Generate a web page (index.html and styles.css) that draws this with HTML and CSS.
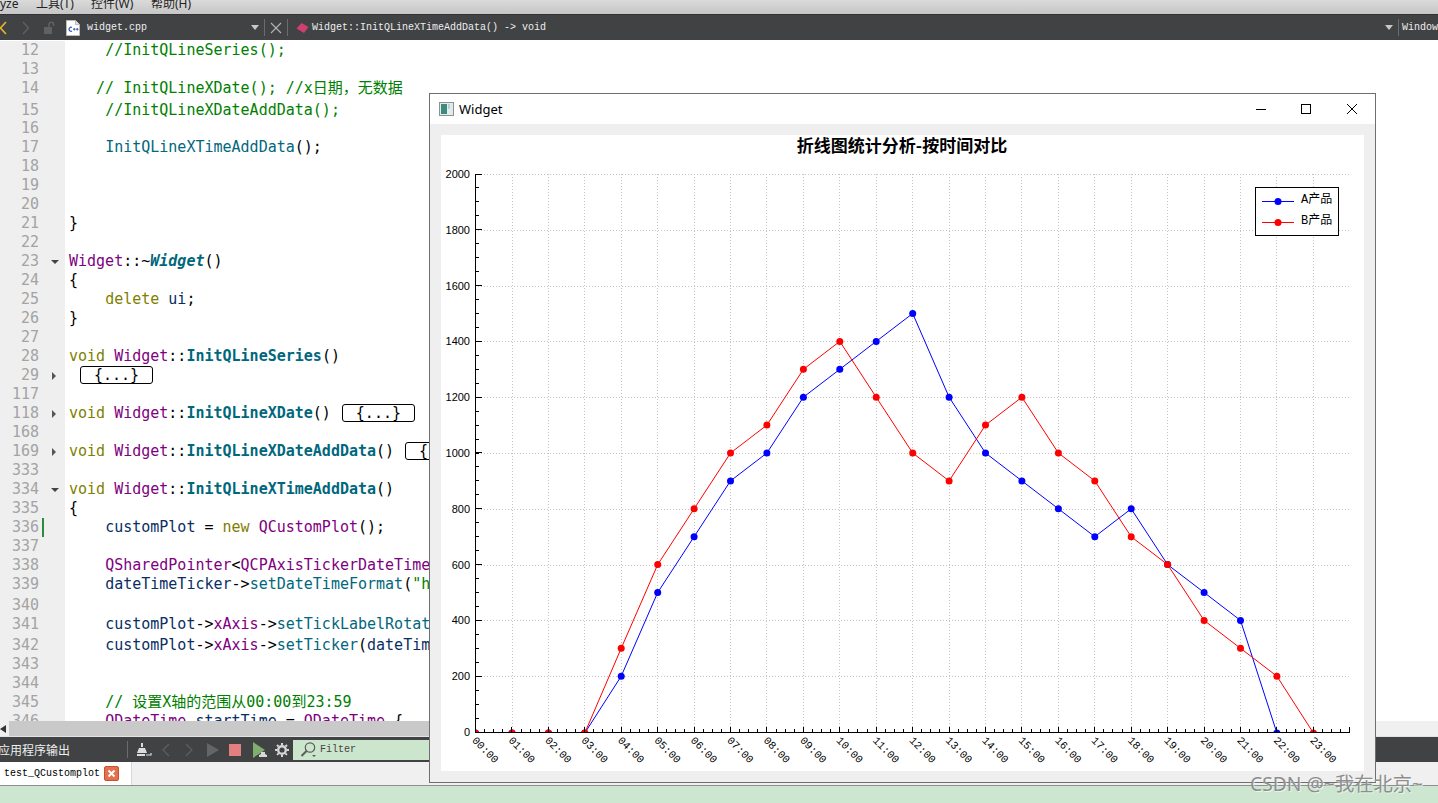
FILE: index.html
```html
<!DOCTYPE html>
<html lang="zh">
<head>
<meta charset="utf-8">
<title>Widget</title>
<link rel="stylesheet" href="styles.css">
</head>
<body>
<div class="ide">
  <div class="menubar"><span class="m-yze">yze</span><span class="m-tools">工具(T)</span><span class="m-ctl">控件(W)</span><span class="m-help">帮助(H)</span></div>

  <div class="toolbar">
    <svg class="ic ic-back" width="10" height="16" viewBox="0 0 10 16"><path d="M7 2 1.500 8 7 14" fill="none" stroke="#e5b52a" stroke-width="1.600"/></svg>
    <svg class="ic ic-fwd" width="10" height="16" viewBox="0 0 10 16"><path d="M2 2l5.500 6L2 14" fill="none" stroke="#5c5e60" stroke-width="1.600"/></svg>
    <svg class="ic ic-lock" width="14" height="14" viewBox="0 0 14 14"><rect x="1" y="6" width="8" height="7" fill="#5f6163"/><path d="M6 6V3.500a2.300 2.300 0 0 1 4.600 0V5" fill="none" stroke="#5f6163" stroke-width="1.500"/></svg>
    <svg class="ic ic-file" width="14" height="16" viewBox="0 0 14 16"><path d="M.5.500h9l4 4v11H.500z" fill="#fff" stroke="#bbb"/><path d="M9.500.500v4h4" fill="#ddd" stroke="#bbb"/><path d="M6 7.500a2 2 0 1 0 0 3.500" fill="none" stroke="#2a52c0" stroke-width="1.200"/><path d="M7 9.200h2.600M8.300 8v2.500M10 9.200h2.600M11.300 8v2.500" stroke="#2a52c0" stroke-width=".9"/></svg>
    <span class="tb-text tb-file">widget.cpp</span>
    <svg class="ic ic-drop" width="8" height="5" viewBox="0 0 8 5"><path d="M0 0h8L4 5z" fill="#c8c8c8"/></svg>
    <span class="tb-sep sep-a"></span>
    <svg class="ic ic-x" width="12" height="12" viewBox="0 0 12 12"><path d="M1 1l10 10M11 1 1 11" stroke="#b5b5b5" stroke-width="1.100"/></svg>
    <span class="tb-sep sep-b"></span>
    <svg class="ic ic-diamond" width="13" height="12" viewBox="0 0 13 12"><path d="M.5 6.500 5.500 1l7 4L8 11z" fill="#d0406e"/></svg>
    <span class="tb-text tb-func">Widget::InitQLineXTimeAddData() -&gt; void</span>
    <svg class="ic ic-drop2" width="8" height="5" viewBox="0 0 8 5"><path d="M0 0h8L4 5z" fill="#c8c8c8"/></svg>
    <span class="tb-sep sep-c"></span>
    <span class="tb-text tb-win">Window</span>
  </div>

  <div class="editor">
    <div class="row"><span class="num">12</span><span class="fold"></span><span class="code">    <i class="c">//InitQLineSeries();</i></span></div>
    <div class="row"><span class="num">13</span><span class="fold"></span><span class="code"></span></div>
    <div class="row taller"><span class="num">14</span><span class="fold"></span><span class="code">   <i class="c">// InitQLineXDate(); //x日期，无数据</i></span></div>
    <div class="row short"><span class="num">15</span><span class="fold"></span><span class="code">    <i class="c">//InitQLineXDateAddData();</i></span></div>
    <div class="row"><span class="num">16</span><span class="fold"></span><span class="code"></span></div>
    <div class="row"><span class="num">17</span><span class="fold"></span><span class="code">    <i class="f">InitQLineXTimeAddData</i>();</span></div>
    <div class="row"><span class="num">18</span><span class="fold"></span><span class="code"></span></div>
    <div class="row"><span class="num">19</span><span class="fold"></span><span class="code"></span></div>
    <div class="row"><span class="num">20</span><span class="fold"></span><span class="code"></span></div>
    <div class="row"><span class="num">21</span><span class="fold"></span><span class="code">}</span></div>
    <div class="row"><span class="num">22</span><span class="fold"></span><span class="code"></span></div>
    <div class="row"><span class="num">23</span><span class="fold"><b class="arr-d"></b></span><span class="code"><i class="t">Widget</i>::~<i class="fi">Widget</i>()</span></div>
    <div class="row"><span class="num">24</span><span class="fold"></span><span class="code">{</span></div>
    <div class="row"><span class="num">25</span><span class="fold"></span><span class="code">    <i class="k">delete</i> <i class="v">ui</i>;</span></div>
    <div class="row"><span class="num">26</span><span class="fold"></span><span class="code">}</span></div>
    <div class="row"><span class="num">27</span><span class="fold"></span><span class="code"></span></div>
    <div class="row"><span class="num">28</span><span class="fold"></span><span class="code"><i class="k">void</i> <i class="t">Widget</i>::<i class="fb">InitQLineSeries</i>()</span></div>
    <div class="row"><span class="num">29</span><span class="fold"><b class="arr-r"></b></span><span class="code"><span class="coll">{...}</span></span></div>
    <div class="row"><span class="num">117</span><span class="fold"></span><span class="code"></span></div>
    <div class="row"><span class="num">118</span><span class="fold"><b class="arr-r"></b></span><span class="code"><i class="k">void</i> <i class="t">Widget</i>::<i class="fb">InitQLineXDate</i>()<span class="coll">{...}</span></span></div>
    <div class="row"><span class="num">168</span><span class="fold"></span><span class="code"></span></div>
    <div class="row"><span class="num">169</span><span class="fold"><b class="arr-r"></b></span><span class="code"><i class="k">void</i> <i class="t">Widget</i>::<i class="fb">InitQLineXDateAddData</i>()<span class="coll">{...}</span></span></div>
    <div class="row"><span class="num">333</span><span class="fold"></span><span class="code"></span></div>
    <div class="row"><span class="num">334</span><span class="fold"><b class="arr-d"></b></span><span class="code"><i class="k">void</i> <i class="t">Widget</i>::<i class="fb">InitQLineXTimeAddData</i>()</span></div>
    <div class="row"><span class="num">335</span><span class="fold"></span><span class="code">{</span></div>
    <div class="row"><span class="num">336</span><span class="fold"><b class="mod"></b></span><span class="code">    <i class="v">customPlot</i> = <i class="k">new</i> <i class="t">QCustomPlot</i>();</span></div>
    <div class="row"><span class="num">337</span><span class="fold"></span><span class="code"></span></div>
    <div class="row"><span class="num">338</span><span class="fold"></span><span class="code">    <i class="t">QSharedPointer</i>&lt;<i class="t">QCPAxisTickerDateTime</i>&gt; <i class="v">dateTimeTicker</i>(<i class="k">new</i> <i class="t">QCPAxisTickerDateTime</i>);</span></div>
    <div class="row tall"><span class="num">339</span><span class="fold"></span><span class="code">    <i class="v">dateTimeTicker</i>-&gt;<i class="f">setDateTimeFormat</i>(<i class="c">"hh:mm"</i>);</span></div>
    <div class="row"><span class="num">340</span><span class="fold"></span><span class="code"></span></div>
    <div class="row tall"><span class="num">341</span><span class="fold"></span><span class="code">    <i class="v">customPlot</i>-&gt;<i class="t">xAxis</i>-&gt;<i class="f">setTickLabelRotation</i>(45);</span></div>
    <div class="row"><span class="num">342</span><span class="fold"></span><span class="code">    <i class="v">customPlot</i>-&gt;<i class="t">xAxis</i>-&gt;<i class="f">setTicker</i>(<i class="v">dateTimeTicker</i>);</span></div>
    <div class="row"><span class="num">343</span><span class="fold"></span><span class="code"></span></div>
    <div class="row"><span class="num">344</span><span class="fold"></span><span class="code"></span></div>
    <div class="row"><span class="num">345</span><span class="fold"></span><span class="code">    <i class="c">// 设置X轴的范围从00:00到23:59</i></span></div>
    <div class="row"><span class="num">346</span><span class="fold"></span><span class="code">    <i class="t">QDateTime</i> <i class="v">startTime</i> = <i class="t">QDateTime</i> {</span></div>
  </div>

  <div class="hscroll"><span class="hs-left"><svg width="7" height="8" viewBox="0 0 7 8"><path d="M6 0v8L0 4z" fill="#333"/></svg></span><span class="hs-thumb"></span></div>

  <div class="outbar">
    <span class="out-title">应用程序输出</span>
    <span class="out-sep"></span>
    <svg class="ob ob-broom" width="16" height="16" viewBox="0 0 16 16"><path d="M5 1h2v4H5z" fill="#ddd"/><path d="M3 6h6l2 5H1z" fill="#ddd"/><path d="M10 13h5v-2" fill="none" stroke="#ddd" stroke-width="1.200"/><path d="M1 12h8v2H1z" fill="#ddd"/></svg>
    <svg class="ob ob-prev" width="10" height="14" viewBox="0 0 10 14"><path d="M8 1 2 7l6 6" fill="none" stroke="#5c5e60" stroke-width="1.300"/></svg>
    <svg class="ob ob-next" width="10" height="14" viewBox="0 0 10 14"><path d="M2 1l6 6-6 6" fill="none" stroke="#5c5e60" stroke-width="1.300"/></svg>
    <svg class="ob ob-play" width="12" height="14" viewBox="0 0 12 14"><path d="M0 0l12 7-12 7z" fill="#636567"/></svg>
    <span class="ob ob-stop"></span>
    <svg class="ob ob-run" width="14" height="16" viewBox="0 0 14 16"><path d="M0 0l12 8-12 8z" fill="#7fae6e"/><path d="M6 15h8v-2l-2-1v-2H8v2l-2 1z" fill="#d8d8d8"/></svg>
    <svg class="ob ob-gear" width="14" height="14" viewBox="0 0 14 14"><circle cx="7" cy="7" r="3.800" fill="none" stroke="#d5d5d5" stroke-width="2.400"/><path d="M7 0v14M0 7h14M2 2l10 10M12 2 2 12" stroke="#d5d5d5" stroke-width="2" stroke-dasharray="2.200 9.600 2.200"/></svg>
    <span class="filter">
      <svg width="17" height="17" viewBox="0 0 17 17"><circle cx="10" cy="6.500" r="4.700" fill="none" stroke="#5b5b5b" stroke-width="1.200"/><path d="M6.500 10 1.500 15" stroke="#5b5b5b" stroke-width="2"/><path d="M12 14h4l-2 2z" fill="#5b5b5b"/></svg>
      <span class="filter-text">Filter</span>
    </span>
  </div>

  <div class="tabs">
    <div class="tab"><span class="tab-text">test_QCustomplot</span><svg width="15" height="15" viewBox="0 0 15 15"><rect x=".5" y=".5" width="14" height="14" rx="1.500" fill="#e66f4e" stroke="#c4532f"/><path d="M4.500 4.500l6 6M10.500 4.500l-6 6" stroke="#fff" stroke-width="2"/></svg></div>
  </div>
  <div class="statusbar"></div>
</div>

<section class="window">
  <header class="win-title">
    <svg class="win-icon" width="15" height="14" viewBox="0 0 15 14"><rect x=".5" y=".5" width="14" height="13" fill="#e6ecec" stroke="#8a9292"/><rect x="2" y="2" width="6" height="10" fill="#3f8a7e"/><rect x="9" y="2" width="2" height="5" fill="#b8cfd4"/><rect x="12" y="2" width="1.500" height="10" fill="#dfe6e6"/></svg>
    <span class="win-name">Widget</span>
    <svg class="win-btn btn-min" width="10" height="10" viewBox="0 0 10 10"><path d="M0 5.500h10" stroke="#000"/></svg>
    <svg class="win-btn btn-max" width="10" height="10" viewBox="0 0 10 10"><rect x=".5" y=".5" width="9" height="9" fill="none" stroke="#000"/></svg>
    <svg class="win-btn btn-close" width="10" height="10" viewBox="0 0 10 10"><path d="M0 0l10 10M10 0 0 10" stroke="#000"/></svg>
  </header>
  <div class="win-body">
    <svg class="plot" width="923" height="636" viewBox="441 135 923 636">
      <defs>
        <clipPath id="area"><rect x="475" y="165" width="876" height="567"/></clipPath>
        <marker id="dot-b" markerUnits="userSpaceOnUse" markerWidth="8" markerHeight="8" refX="4" refY="4"><circle cx="4" cy="4" r="3.500" fill="#0000ff"/></marker>
        <marker id="dot-r" markerUnits="userSpaceOnUse" markerWidth="8" markerHeight="8" refX="4" refY="4"><circle cx="4" cy="4" r="3.500" fill="#ff0000"/></marker>
      </defs>
      <text class="title" x="902" y="151.500">折线图统计分析-按时间对比</text>

      <path class="grid" d="M475 174.500H1350M475 230.500H1350M475 286.500H1350M475 341.500H1350M475 397.500H1350M475 453.500H1350M475 509.500H1350M475 565.500H1350M475 620.500H1350M475 676.500H1350"/>
      <path class="grid" d="M512 174V732M548.500 174V732M584.500 174V732M621.500 174V732M657.500 174V732M694.500 174V732M730.500 174V732M766.500 174V732M803.500 174V732M839.500 174V732M876.500 174V732M912.500 174V732M949.500 174V732M985.500 174V732M1021.500 174V732M1058.500 174V732M1094.500 174V732M1131.500 174V732M1167.500 174V732M1204.500 174V732M1240.500 174V732M1276.500 174V732M1313.500 174V732"/>

      <g clip-path="url(#area)">
        <polyline class="ser ser-a" points="475.500,733 512,733 548.400,733 584.800,733 621.200,676.200 657.700,592.500 694.100,536.700 730.500,480.900 766.900,453 803.400,397.200 839.800,369.300 876.200,341.400 912.700,313.500 949.100,397.200 985.500,453 1021.900,480.900 1058.400,508.800 1094.800,536.700 1131.200,508.800 1167.600,564.600 1204.100,592.500 1240.500,620.400 1276.900,733"/>
        <polyline class="ser ser-b" points="475.500,733 512,733 548.400,733 584.800,733 621.200,648.300 657.700,564.600 694.100,508.800 730.500,453 766.900,425.100 803.400,369.300 839.800,341.400 876.200,397.200 912.700,453 949.100,480.900 985.500,425.100 1021.900,397.200 1058.400,453 1094.800,480.900 1131.200,536.700 1167.600,564.600 1204.100,620.400 1240.500,648.300 1276.900,676.200 1313.400,733"/>
      </g>

      <path class="axis" d="M475.500 174V732.500M475 732.500H1350"/>
      <path class="tick-x-major" d="M475 729.500H1350"/>
      <path class="tick-x-minor" d="M475 730.500H1350"/>
      <path class="tick-y-major" d="M478.500 732.500V173"/>
      <path class="tick-y-minor" d="M477 732.500V173"/>

      <g class="ylab">
        <text x="470" y="178">2000</text><text x="470" y="234">1800</text><text x="470" y="290">1600</text><text x="470" y="345">1400</text><text x="470" y="401">1200</text><text x="470" y="457">1000</text><text x="470" y="513">800</text><text x="470" y="569">600</text><text x="470" y="624">400</text><text x="470" y="680">200</text><text x="470" y="736">0</text>
      </g>
      <g class="xlab">
        <text transform="translate(471.500 741) rotate(45)">00:00</text>
        <text transform="translate(508 741) rotate(45)">01:00</text>
        <text transform="translate(544.400 741) rotate(45)">02:00</text>
        <text transform="translate(580.800 741) rotate(45)">03:00</text>
        <text transform="translate(617.200 741) rotate(45)">04:00</text>
        <text transform="translate(653.700 741) rotate(45)">05:00</text>
        <text transform="translate(690.100 741) rotate(45)">06:00</text>
        <text transform="translate(726.500 741) rotate(45)">07:00</text>
        <text transform="translate(762.900 741) rotate(45)">08:00</text>
        <text transform="translate(799.400 741) rotate(45)">09:00</text>
        <text transform="translate(835.800 741) rotate(45)">10:00</text>
        <text transform="translate(872.200 741) rotate(45)">11:00</text>
        <text transform="translate(908.700 741) rotate(45)">12:00</text>
        <text transform="translate(945.100 741) rotate(45)">13:00</text>
        <text transform="translate(981.500 741) rotate(45)">14:00</text>
        <text transform="translate(1017.900 741) rotate(45)">15:00</text>
        <text transform="translate(1054.400 741) rotate(45)">16:00</text>
        <text transform="translate(1090.800 741) rotate(45)">17:00</text>
        <text transform="translate(1127.200 741) rotate(45)">18:00</text>
        <text transform="translate(1163.600 741) rotate(45)">19:00</text>
        <text transform="translate(1200.100 741) rotate(45)">20:00</text>
        <text transform="translate(1236.500 741) rotate(45)">21:00</text>
        <text transform="translate(1272.900 741) rotate(45)">22:00</text>
        <text transform="translate(1309.400 741) rotate(45)">23:00</text>
      </g>

      <rect class="legend" x="1255.500" y="187.500" width="83" height="48"/>
      <path class="leg-a" d="M1262 201.500H1294"/>
      <circle class="dot-a" cx="1278" cy="201.500" r="3.500"/>
      <path class="leg-b" d="M1262 222.500H1294"/>
      <circle class="dot-b" cx="1278" cy="222.500" r="3.500"/>
      <text class="leg-text" x="1301" y="203">A产品</text>
      <text class="leg-text" x="1301" y="224">B产品</text>
    </svg>
  </div>
</section>

<div class="watermark">CSDN @~我在北京~</div>
</body>
</html>
```
FILE: styles.css
```css
* { box-sizing: border-box; }
html, body { margin: 0; padding: 0; }
body { width: 1438px; height: 803px; overflow: hidden; position: relative; background: #fff; font-family: "Liberation Sans", "Noto Sans CJK SC", sans-serif; }
.ide { display: flex; flex-direction: column; height: 803px; }

.menubar { height: 15px; flex: none; overflow: hidden; position: relative; background: linear-gradient(#dadada, #c6c6c6); font-family: "Noto Sans", "Noto Sans CJK SC", sans-serif; font-size: 12px; line-height: 7px; color: #222; display: flex; border-bottom: 1px solid #333; }
.m-yze { margin-left: 0; width: 36px; }
.m-tools { width: 55px; }
.m-ctl { width: 60px; }

.toolbar { height: 25px; flex: none; background: #404244; display: flex; align-items: center; }
.ic { flex: none; display: block; }
.ic-back { margin-left: -1px; }
.ic-fwd { margin-left: 12px; }
.ic-lock { margin-left: 12px; }
.ic-file { margin-left: 9px; }
.tb-text { font-family: "Liberation Mono", monospace; font-size: 10px; color: #eee; white-space: pre; flex: none; }
.tb-file { margin-left: 7px; width: 164px; }
.ic-drop { margin-left: 0; }
.tb-sep { width: 1px; height: 17px; background: #6a6c6e; flex: none; }
.sep-a { margin-left: 5px; }
.ic-x { margin-left: 5px; }
.sep-b { margin-left: 5px; }
.ic-diamond { margin-left: 8px; }
.tb-func { margin-left: 3px; width: 1073px; }
.ic-drop2 { margin-left: 0; }
.sep-c { margin-left: 5px; }
.tb-win { margin-left: 3px; }

.editor { flex: 1 1 0; min-height: 0; overflow: hidden; padding-top: 1px; font-family: "DejaVu Sans Mono", "Noto Sans CJK SC", monospace; font-size: 15px; color: #000; }
.row { display: flex; height: 19px; line-height: 19px; white-space: pre; }
.row.tall { height: 21px; }
.row.taller { height: 22px; }
.row.short { height: 18px; }
.num { width: 39px; flex: none; text-align: right; background: #efefef; color: #a3a3a3; }
.fold { width: 26px; flex: none; background: #efefef; position: relative; display: flex; align-items: center; }
.code { padding-left: 4px; flex: 1; overflow: hidden; }
.code i { font-style: normal; }
.c { color: #008000; }
.f { color: #00677c; }
.fb { color: #00677c; font-weight: 700; }
.code .fi { color: #00677c; font-weight: 700; font-style: italic; }
.t { color: #800080; }
.k { color: #808000; }
.v { color: #092e64; }
.arr-d { margin-left: 12px; width: 0; height: 0; border-left: 4px solid transparent; border-right: 4px solid transparent; border-top: 4px solid #444; }
.arr-r { margin-left: 13px; width: 0; height: 0; border-top: 4px solid transparent; border-bottom: 4px solid transparent; border-left: 4px solid #555; }
.mod { margin-left: 3px; width: 2px; height: 19px; background: #2e8b3d; }
.coll { display: inline-block; width: 73px; height: 18px; line-height: 16px; margin-left: 11px; border: 1px solid #000; border-radius: 3px; text-align: center; vertical-align: top; }

.hscroll { height: 16px; flex: none; background: #f0f0f0; display: flex; border-bottom: 1px solid #e4e4e4; }
.hs-left { width: 9px; flex: none; display: flex; align-items: center; justify-content: flex-start; background: #efefef; }
.hs-thumb { width: 1300px; background: #c9c9c9; }

.outbar { height: 25px; flex: none; background: #404244; display: flex; align-items: center; overflow: hidden; }
.out-title { margin-left: -2px; width: 129px; flex: none; color: #eee; font-family: "Noto Sans CJK SC", sans-serif; font-size: 12px; }
.out-sep { width: 1px; height: 17px; background: #6a6c6e; flex: none; }
.ob { flex: none; display: block; }
.ob-broom { margin-left: 8px; }
.ob-prev { margin-left: 9px; }
.ob-next { margin-left: 13px; }
.ob-play { margin-left: 13px; }
.ob-stop { margin-left: 10px; width: 12px; height: 12px; background: #e27f7f; }
.ob-run { margin-left: 12px; }
.ob-gear { margin-left: 8px; }
.filter { margin-left: 4px; width: 300px; flex: none; height: 20px; background: #cbe6cc; display: flex; align-items: center; padding-left: 7px; }
.filter-text { margin-left: 3px; font-family: "Liberation Mono", monospace; font-size: 10px; color: #444; }

.tabs { height: 23px; flex: none; background: #f0f0f0; display: flex; }
.tab { width: 132px; background: #fff; border-right: 1px solid #d8d8d8; display: flex; align-items: center; padding-left: 4px; gap: 4px; }
.tab-text { font-family: "Liberation Mono", monospace; font-size: 10px; color: #000; }
.statusbar { height: 18px; flex: none; background: #cce6cf; border-top: 1px solid #8f8f8f; }

.window { position: absolute; left: 429px; top: 93px; width: 947px; height: 690px; background: #efefef; border: 1px solid #6f6f6f; display: flex; flex-direction: column; }
.win-title { height: 30px; flex: none; background: #fff; display: flex; align-items: center; padding-left: 9px; }
.win-icon { flex: none; }
.win-name { margin-left: 5px; width: 797px; flex: none; font-family: "Noto Sans", sans-serif; font-size: 13px; color: #000; }
.win-btn { flex: none; display: block; }
.btn-max { margin-left: 35px; }
.btn-close { margin-left: 36px; }
.win-body { padding: 11px 0 0 11px; }
.plot { display: block; background: #fff; }

.title { font-family: "Noto Sans CJK SC", sans-serif; font-size: 17px; font-weight: 700; text-anchor: middle; fill: #000; }
.grid { fill: none; stroke: #c4c4c4; stroke-width: 1; stroke-dasharray: 1 2; shape-rendering: crispEdges; }
.ser { fill: none; stroke-width: 1; }
.ser-a { stroke: #0000ff; marker-start: url(#dot-b); marker-mid: url(#dot-b); marker-end: url(#dot-b); }
.ser-b { stroke: #ff0000; marker-start: url(#dot-r); marker-mid: url(#dot-r); marker-end: url(#dot-r); }
.axis { fill: none; stroke: #000; stroke-width: 1; shape-rendering: crispEdges; }
.tick-x-major { fill: none; stroke: #000; stroke-width: 5; stroke-dasharray: 1 35.430; stroke-dashoffset: 0; shape-rendering: crispEdges; }
.tick-x-minor { fill: none; stroke: #000; stroke-width: 3; stroke-dasharray: 1 8.107; shape-rendering: crispEdges; }
.tick-y-major { fill: none; stroke: #000; stroke-width: 6; stroke-dasharray: 1 54.800; shape-rendering: crispEdges; }
.tick-y-minor { fill: none; stroke: #000; stroke-width: 3; stroke-dasharray: 1 12.950; shape-rendering: crispEdges; }
.ylab text { font-family: "Liberation Sans", sans-serif; font-size: 11px; text-anchor: end; fill: #000; }
.xlab text { font-family: "Liberation Mono", monospace; font-size: 10.800px; fill: #000; }
.legend { fill: #fff; stroke: #000; stroke-width: 1; shape-rendering: crispEdges; }
.leg-a { stroke: #0000ff; stroke-width: 1; fill: none; }
.leg-b { stroke: #ff0000; stroke-width: 1; fill: none; }
.dot-a { fill: #0000ff; }
.dot-b { fill: #ff0000; }
.leg-text { font-family: "Liberation Mono", "Noto Sans CJK SC", monospace; font-size: 12px; fill: #000; }

.watermark { position: absolute; left: 1250px; top: 771px; font-family: "Noto Sans", "Noto Sans CJK SC", sans-serif; font-size: 19.300px; line-height: 26px; color: #8e8e8e; text-shadow: 1px 1px 1px rgba(255,255,255,.7); white-space: nowrap; }
```
